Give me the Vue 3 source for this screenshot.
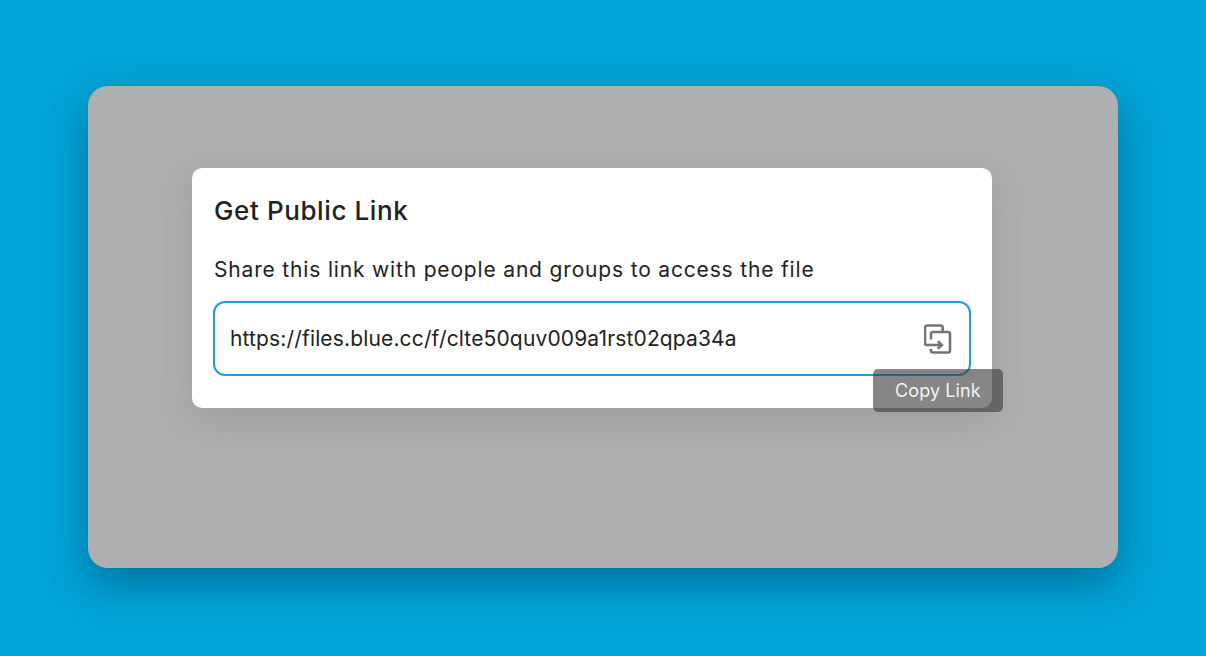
<script setup>
const url = 'https://files.blue.cc/f/clte50quv009a1rst02qpa34a'
</script>

<template>
  <div class="stage">
    <div class="window">
      <div class="modal">
        <h2 class="title">Get Public Link</h2>
        <p class="desc">Share this link with people and groups to access the file</p>
        <div class="field">
          <span class="url">{{ url }}</span>
          <svg class="icon" width="28" height="30" viewBox="0 0 28 30" fill="none" stroke="#737476" stroke-width="2.6">
            <path d="M18.6 8V3.5a2 2 0 0 0-2-2H3a2 2 0 0 0-2 2V19a2 2 0 0 0 2 2H17" />
            <path d="M7 15.5V10a2 2 0 0 1 2-2H24a2 2 0 0 1 2 2V26.5a2 2 0 0 1-2 2H9a2 2 0 0 1-2-2V25" />
            <path d="M13.8 17.2L17.8 21L13.8 24.8" />
          </svg>
          <div class="tooltip">Copy Link</div>
        </div>
      </div>
    </div>
  </div>
</template>

<style>
html, body { margin: 0; background: #00a4d7; }
</style>

<style scoped>
.stage {
  width: 1206px;
  height: 656px;
  box-sizing: border-box;
  padding: 86px 88px 88px;
  background: #00a4d7;
  font-family: Inter, "Liberation Sans", sans-serif;
  overflow: hidden;
}
.window {
  height: 482px;
  box-sizing: border-box;
  padding: 82px 0 0 104px;
  border-radius: 20px;
  background: #aeafb1;
  box-shadow: 0 16px 40px rgba(0, 40, 70, 0.4);
}
.modal {
  width: 800px;
  height: 240px;
  box-sizing: border-box;
  padding: 27px 21px 0 21px;
  background: #fff;
  border-radius: 10px;
  box-shadow: 0 10px 36px rgba(60, 60, 60, 0.16);
  color: #222;
}
.title {
  margin: 0 0 0 1px;
  font-size: 26px;
  line-height: 32px;
  font-weight: 500;
  letter-spacing: 0.6px;
}
.desc {
  margin: 29px 0 0 1px;
  font-size: 21px;
  line-height: 28px;
  letter-spacing: 0.83px;
}
.field {
  position: relative;
  margin-top: 17px;
  height: 75px;
  box-sizing: border-box;
  padding: 0 17px 0 15px;
  border: 2px solid #1f9fd4;
  border-radius: 12px;
  display: flex;
  align-items: center;
  justify-content: space-between;
}
.url {
  font-size: 21px;
  letter-spacing: 0.15px;
}
.tooltip {
  position: absolute;
  left: 658px;
  top: 66px;
  width: 130px;
  height: 43px;
  box-sizing: border-box;
  padding-left: 22px;
  display: flex;
  align-items: center;
  background: rgba(60, 60, 60, 0.62);
  border-radius: 5px;
  color: #f2f2f2;
  font-size: 18px;
  letter-spacing: 0.1px;
}
</style>
